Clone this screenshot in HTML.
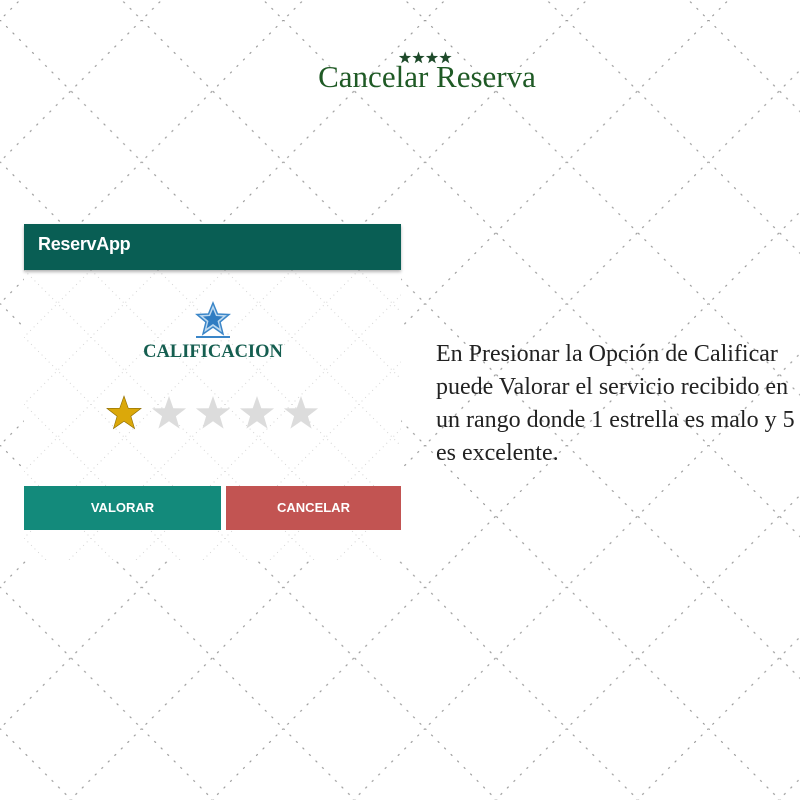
<!DOCTYPE html>
<html><head><meta charset="utf-8"><style>
html,body{margin:0;padding:0;width:800px;height:800px;overflow:hidden;background:#fff;position:relative;font-family:"Liberation Sans",sans-serif}
.abs{position:absolute}
</style></head><body>
<svg class="abs" style="left:0;top:0" width="800" height="800">
<defs>
<pattern id="p" x="0" y="20" width="141.7" height="141.7" patternUnits="userSpaceOnUse">
<line x1="0" y1="0" x2="141.7" y2="141.7" stroke="#9a9a9a" stroke-width="1.2" stroke-dasharray="1.2 8" stroke-linecap="round"/>
<line x1="141.7" y1="0" x2="0" y2="141.7" stroke="#9a9a9a" stroke-width="1.2" stroke-dasharray="1.2 8" stroke-linecap="round"/>
</pattern>
<pattern id="q" x="24" y="270" width="67" height="67" patternUnits="userSpaceOnUse">
<line x1="0" y1="0" x2="67" y2="67" stroke="#d4d4d4" stroke-width="1" stroke-dasharray="1 4"/>
<line x1="67" y1="0" x2="0" y2="67" stroke="#d4d4d4" stroke-width="1" stroke-dasharray="1 4"/>
</pattern>
<polygon id="st" points="0,-18 4.3,-5.8 17.1,-5.6 6.9,2.2 10.6,14.6 0,7.2 -10.6,14.6 -6.9,2.2 -17.1,-5.6 -4.3,-5.8"/>
</defs>
<rect width="800" height="800" fill="url(#p)"/>
<rect x="24" y="270" width="377" height="290" fill="#fff"/>
<rect x="24" y="270" width="377" height="290" fill="url(#q)"/>
<g fill="#1e4a2a">
<use href="#st" transform="translate(405,58) scale(0.36)"/>
<use href="#st" transform="translate(418.5,58) scale(0.36)"/>
<use href="#st" transform="translate(432,58) scale(0.36)"/>
<use href="#st" transform="translate(445.5,58) scale(0.36)"/>
</g>
<use href="#st" fill="#dba80a" stroke="#8a6a00" stroke-width="0.6" transform="translate(124,414)"/>
<g fill="#dcdcdc">
<use href="#st" transform="translate(169,414)"/>
<use href="#st" transform="translate(213,414)"/>
<use href="#st" transform="translate(257,414)"/>
<use href="#st" transform="translate(301,414)"/>
</g>
</svg>
<div class="abs" style="left:280px;top:59px;width:294px;text-align:center;font-family:'Liberation Serif',serif;font-size:31px;color:#1f5a25">Cancelar Reserva</div>
<div class="abs" style="left:24px;top:224px;width:377px;height:46px;background:#095e54;box-shadow:0 2px 3px rgba(0,0,0,.3)"></div>
<div class="abs" style="left:38px;top:234px;color:#fff;font-size:18px;font-weight:bold;letter-spacing:-0.3px">ReservApp</div>
<svg class="abs" style="left:193px;top:300px" width="40" height="40" viewBox="0 0 40 40">
<polygon points="20,3 24.5,14 36,14.5 27,22 30,34 20,27 10,34 13,22 4,14.5 15.5,14" fill="#bcd8ef" stroke="#3b86c8" stroke-width="1.5"/>
<polygon points="20,9 23,16 30,16.5 24.5,21 26.5,28.5 20,24 13.5,28.5 15.5,21 10,16.5 17,16" fill="#2f7cc2"/>
<rect x="3" y="36" width="34" height="2" fill="#3b86c8"/>
</svg>
<div class="abs" style="left:114px;top:342px;width:198px;text-align:center;font-family:'Liberation Serif',serif;font-weight:bold;font-size:18.5px;color:#155e50">CALIFICACION</div>
<div class="abs" style="left:24px;top:486px;width:197px;height:44px;background:#138a7b;color:#fff;font-weight:bold;font-size:13px;line-height:44px;text-align:center">VALORAR</div>
<div class="abs" style="left:226px;top:486px;width:175px;height:44px;background:#c25452;color:#fff;font-weight:bold;font-size:13px;line-height:44px;text-align:center">CANCELAR</div>
<div class="abs" style="left:436px;top:338px;width:400px;font-family:'Liberation Serif',serif;font-size:24px;line-height:33px;color:#222;white-space:nowrap">En Presionar la Opción de Calificar<br>puede Valorar el servicio recibido en<br>un rango donde 1 estrella es malo y 5<br>es excelente.</div>
</body></html>
